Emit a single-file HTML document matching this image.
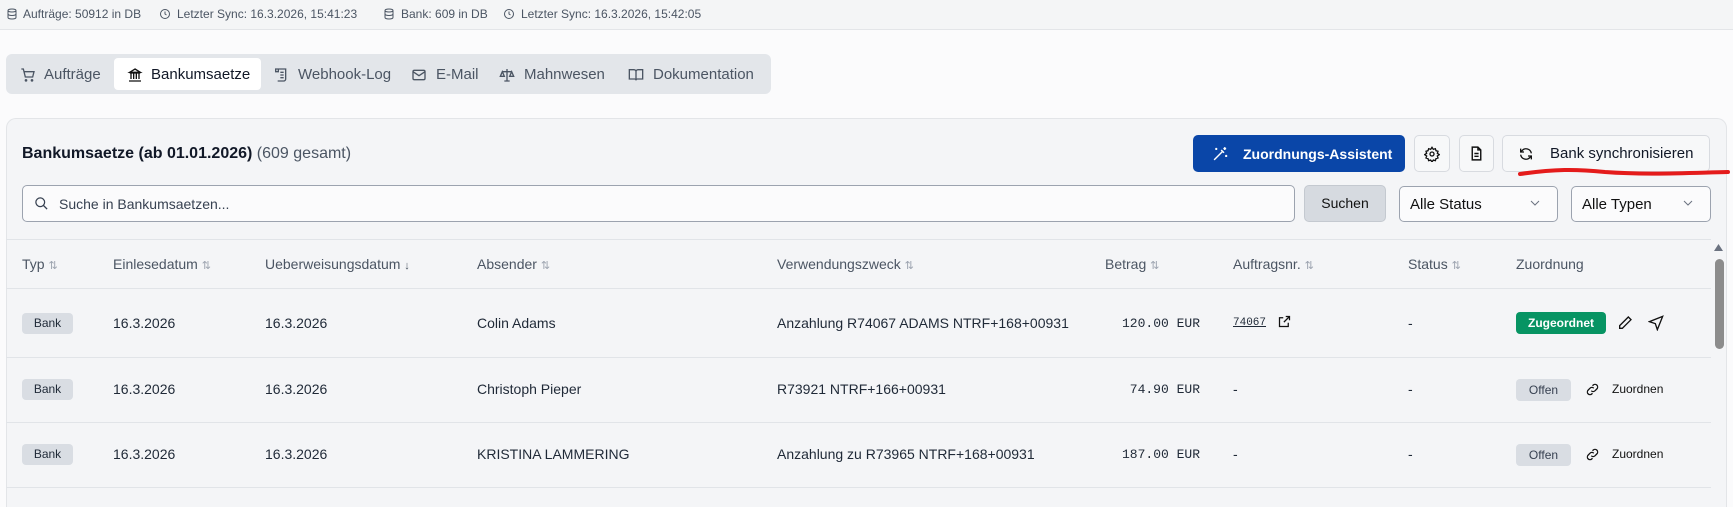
<!DOCTYPE html>
<html><head><meta charset="utf-8"><style>
*{box-sizing:border-box;margin:0;padding:0}
html,body{width:1733px;height:507px;overflow:hidden}
body{background:#fbfbfc;font-family:"Liberation Sans",sans-serif;color:#1f2937}
#w{position:relative;width:1733px;height:507px;overflow:hidden}
.a{position:absolute;white-space:nowrap}
.top{left:0;top:0;width:1733px;height:30px;background:#f4f5f6;border-bottom:1px solid #e3e5e8;font-size:12px;color:#4b5563}
.tabs{left:6px;top:54px;width:765px;height:40px;background:#e3e6ea;border-radius:6px}
.act{left:114px;top:58px;width:147px;height:32px;background:#fff;border-radius:4px}
.tab{font-size:15px;color:#4b5563;top:66px}
.card{left:6px;top:118px;width:1721px;height:389px;background:#f4f5f7;border:1px solid #e3e5e8;border-bottom:none;border-radius:10px 10px 0 0}
.btn{border:1px solid #d8dbe0;border-radius:5px;background:#f7f8f9}
.hd{font-size:14px;color:#4b5563;top:256px}
.c{font-size:14px;color:#1f2937}
.m{font-family:"Liberation Mono",monospace;font-size:13px}
.line{left:6px;width:1705px;height:1px;background:#e1e4e8}
.bank{width:51px;height:21px;background:#d9dde3;border-radius:4px;font-size:12px;text-align:center;line-height:21px;left:22px}
.off{width:55px;height:22px;background:#d9dde3;border-radius:4px;font-size:12px;text-align:center;line-height:22px;left:1516px;color:#374151}
.si{color:#9ca3af;font-size:11px}
svg{position:absolute}
</style></head><body><div id="w">
<div class="a top"></div>
<svg style="left:6px;top:8px" width="12" height="12" viewBox="0 0 24 24" fill="none" stroke="#4b5563" stroke-width="2"><ellipse cx="12" cy="5" rx="8" ry="3"/><path d="M4 5v14c0 1.7 3.6 3 8 3s8-1.3 8-3V5M4 12c0 1.7 3.6 3 8 3s8-1.3 8-3"/></svg>
<div class="a" style="left:23px;top:7px;font-size:12px;color:#4b5563">Aufträge: 50912 in DB</div>
<svg style="left:159px;top:8px" width="12" height="12" viewBox="0 0 24 24" fill="none" stroke="#4b5563" stroke-width="2"><circle cx="12" cy="12" r="9"/><path d="M12 7v5l3 2"/></svg>
<div class="a" style="left:177px;top:7px;font-size:12px;color:#4b5563">Letzter Sync: 16.3.2026, 15:41:23</div>
<svg style="left:383px;top:8px" width="12" height="12" viewBox="0 0 24 24" fill="none" stroke="#4b5563" stroke-width="2"><ellipse cx="12" cy="5" rx="8" ry="3"/><path d="M4 5v14c0 1.7 3.6 3 8 3s8-1.3 8-3V5M4 12c0 1.7 3.6 3 8 3s8-1.3 8-3"/></svg>
<div class="a" style="left:401px;top:7px;font-size:12px;color:#4b5563">Bank: 609 in DB</div>
<svg style="left:503px;top:8px" width="12" height="12" viewBox="0 0 24 24" fill="none" stroke="#4b5563" stroke-width="2"><circle cx="12" cy="12" r="9"/><path d="M12 7v5l3 2"/></svg>
<div class="a" style="left:521px;top:7px;font-size:12px;color:#4b5563">Letzter Sync: 16.3.2026, 15:42:05</div>

<div class="a tabs"></div><div class="a act"></div>
<svg style="left:20px;top:67px" width="16" height="16" viewBox="0 0 24 24" fill="none" stroke="#4b5563" stroke-width="2"><path d="M2 3h3l3 12h11l2-8H6"/><circle cx="9" cy="20" r="1"/><circle cx="18" cy="20" r="1"/></svg>
<div class="a tab" style="left:44px">Aufträge</div>
<svg style="left:127px;top:67px" width="16" height="16" viewBox="0 0 24 24" fill="none" stroke="#111" stroke-width="2"><path d="M3 21h18M4 9h16M12 3l8 5H4zM6 10v8M10 10v8M14 10v8M18 10v8"/></svg>
<div class="a tab" style="left:151px;color:#111827">Bankumsaetze</div>
<svg style="left:273px;top:67px" width="16" height="16" viewBox="0 0 24 24" fill="none" stroke="#4b5563" stroke-width="2"><path d="M8 3h11v15a3 3 0 0 1-3 3H7M4 3h4v4H4zM11 8h5M11 12h5M11 16h5"/></svg>
<div class="a tab" style="left:298px">Webhook-Log</div>
<svg style="left:411px;top:67px" width="16" height="16" viewBox="0 0 24 24" fill="none" stroke="#4b5563" stroke-width="2"><rect x="3" y="5" width="18" height="14" rx="2"/><path d="M3 7l9 6 9-6"/></svg>
<div class="a tab" style="left:436px">E-Mail</div>
<svg style="left:499px;top:67px" width="16" height="16" viewBox="0 0 24 24" fill="none" stroke="#4b5563" stroke-width="2"><path d="M12 3v18M5 7h14M5 7l-3 7h6zM19 7l-3 7h6zM8 21h8"/></svg>
<div class="a tab" style="left:524px">Mahnwesen</div>
<svg style="left:628px;top:67px" width="16" height="16" viewBox="0 0 24 24" fill="none" stroke="#4b5563" stroke-width="2"><path d="M2 4h7a3 3 0 0 1 3 3v13a2 2 0 0 0-2-2H2zM22 4h-7a3 3 0 0 0-3 3v13a2 2 0 0 1 2-2h8z"/></svg>
<div class="a tab" style="left:653px">Dokumentation</div>

<div class="a card"></div>
<div class="a" style="left:22px;top:145px;font-size:16px;font-weight:bold;color:#111827">Bankumsaetze (ab 01.01.2026) <span style="font-weight:normal;color:#4b5563">(609 gesamt)</span></div>

<div class="a" style="left:1193px;top:135px;width:212px;height:37px;background:#0a46a8;border-radius:5px"></div>
<svg style="left:1212px;top:145px" width="17" height="17" viewBox="0 0 24 24" fill="none" stroke="#fff" stroke-width="2"><path d="M3 21L15 9M13 7l4 4M18 3v4M16 5h4M6 4v3M4.5 5.5h3M20 14v3M18.5 15.5h3"/></svg>
<div class="a" style="left:1243px;top:146px;font-size:14px;font-weight:bold;color:#fff">Zuordnungs-Assistent</div>
<div class="a btn" style="left:1414px;top:135px;width:36px;height:37px"></div>
<svg style="left:1424px;top:146px" width="16" height="16" viewBox="0 0 24 24" fill="none" stroke="#111" stroke-width="2"><circle cx="12" cy="12" r="3"/><path d="M12 2l2 3 3-1 1 3 3 1-1 3 3 2-3 2 1 3-3 1-1 3-3-1-2 3-2-3-3 1-1-3-3-1 1-3-3-2 3-2-1-3 3-1 1-3 3 1z"/></svg>
<div class="a btn" style="left:1459px;top:135px;width:35px;height:37px"></div>
<svg style="left:1468px;top:145px" width="17" height="17" viewBox="0 0 24 24" fill="none" stroke="#111" stroke-width="2"><path d="M14 3H6v18h12V7zM14 3v4h4M9 12h6M9 16h6"/></svg>
<div class="a btn" style="left:1502px;top:135px;width:208px;height:37px"></div>
<svg style="left:1518px;top:146px" width="16" height="16" viewBox="0 0 24 24" fill="none" stroke="#111" stroke-width="2"><path d="M20 11a8 8 0 0 0-14-4L4 9M4 4v5h5M4 13a8 8 0 0 0 14 4l2-2M20 20v-5h-5"/></svg>
<div class="a" style="left:1550px;top:145px;font-size:15px;color:#111827">Bank synchronisieren</div>
<svg style="left:1515px;top:166px" width="218" height="14"><path d="M5 8 C40 3 60 3 90 6 C130 9 170 7 213 6" stroke="#e41b1b" stroke-width="4" fill="none" stroke-linecap="round"/></svg>

<div class="a" style="left:22px;top:185px;width:1273px;height:37px;background:#fbfbfc;border:1px solid #9ca3af;border-radius:5px"></div>
<svg style="left:34px;top:196px" width="15" height="15" viewBox="0 0 24 24" fill="none" stroke="#374151" stroke-width="2"><circle cx="10" cy="10" r="7"/><path d="M15 15l6 6"/></svg>
<div class="a" style="left:59px;top:196px;font-size:14px;color:#374151">Suche in Bankumsaetzen...</div>
<div class="a" style="left:1304px;top:185px;width:82px;height:37px;background:#d6dae0;border:1px solid #c4c9d0;border-radius:5px;font-size:14px;text-align:center;line-height:35px;color:#111">Suchen</div>
<div class="a" style="left:1399px;top:186px;width:159px;height:36px;background:#fbfbfc;border:1px solid #9ca3af;border-radius:5px"></div>
<div class="a" style="left:1410px;top:196px;font-size:15px;color:#111">Alle Status</div>
<svg style="left:1530px;top:200px" width="10" height="7"><path d="M1 1l4 4 4-4" stroke="#6b7280" fill="none"/></svg>
<div class="a" style="left:1571px;top:186px;width:140px;height:36px;background:#fbfbfc;border:1px solid #9ca3af;border-radius:5px"></div>
<div class="a" style="left:1582px;top:196px;font-size:15px;color:#111">Alle Typen</div>
<svg style="left:1683px;top:200px" width="10" height="7"><path d="M1 1l4 4 4-4" stroke="#6b7280" fill="none"/></svg>

<div class="a line" style="top:239px"></div>
<div class="a hd" style="left:22px">Typ <span class="si">⇅</span></div>
<div class="a hd" style="left:113px">Einlesedatum <span class="si">⇅</span></div>
<div class="a hd" style="left:265px">Ueberweisungsdatum <span class="si" style="color:#4b5563">↓</span></div>
<div class="a hd" style="left:477px">Absender <span class="si">⇅</span></div>
<div class="a hd" style="left:777px">Verwendungszweck <span class="si">⇅</span></div>
<div class="a hd" style="left:1105px">Betrag <span class="si">⇅</span></div>
<div class="a hd" style="left:1233px">Auftragsnr. <span class="si">⇅</span></div>
<div class="a hd" style="left:1408px">Status <span class="si">⇅</span></div>
<div class="a hd" style="left:1516px">Zuordnung</div>
<div class="a line" style="top:288px"></div>

<div class="a bank" style="top:313px">Bank</div>
<div class="a c" style="left:113px;top:315px">16.3.2026</div>
<div class="a c" style="left:265px;top:315px">16.3.2026</div>
<div class="a c" style="left:477px;top:315px">Colin Adams</div>
<div class="a c" style="left:777px;top:315px">Anzahlung R74067 ADAMS NTRF+168+00931</div>
<div class="a c m" style="right:533px;top:316px">120.00 EUR</div>
<div class="a m" style="left:1233px;top:317px;font-size:11px;text-decoration:underline">74067</div>
<svg style="left:1277px;top:314px" width="15" height="15" viewBox="0 0 24 24" fill="none" stroke="#111" stroke-width="2"><path d="M14 4h6v6M20 4l-9 9M18 14v6H4V6h6"/></svg>
<div class="a c" style="left:1408px;top:315px">-</div>
<div class="a" style="left:1516px;top:312px;width:90px;height:22px;background:#079463;border-radius:4px;color:#fff;font-size:12px;font-weight:bold;text-align:center;line-height:22px">Zugeordnet</div>
<svg style="left:1617px;top:315px" width="16" height="16" viewBox="0 0 24 24" fill="none" stroke="#111" stroke-width="2"><path d="M17 3l4 4L8 20H4v-4z"/></svg>
<svg style="left:1648px;top:315px" width="16" height="16" viewBox="0 0 24 24" fill="none" stroke="#111" stroke-width="2"><path d="M22 2L2 10l9 3 3 9z"/></svg>
<div class="a line" style="top:357px"></div>

<div class="a bank" style="top:379px">Bank</div>
<div class="a c" style="left:113px;top:381px">16.3.2026</div>
<div class="a c" style="left:265px;top:381px">16.3.2026</div>
<div class="a c" style="left:477px;top:381px">Christoph Pieper</div>
<div class="a c" style="left:777px;top:381px">R73921 NTRF+166+00931</div>
<div class="a c m" style="right:533px;top:382px">74.90 EUR</div>
<div class="a c" style="left:1233px;top:381px">-</div>
<div class="a c" style="left:1408px;top:381px">-</div>
<div class="a off" style="top:379px">Offen</div>
<svg style="left:1585px;top:382px" width="15" height="15" viewBox="0 0 24 24" fill="none" stroke="#111" stroke-width="2"><path d="M10 14a4 4 0 0 0 6 0l3-3a4 4 0 0 0-6-6l-1 1M14 10a4 4 0 0 0-6 0l-3 3a4 4 0 0 0 6 6l1-1"/></svg>
<div class="a" style="left:1612px;top:382px;font-size:12px;color:#111">Zuordnen</div>
<div class="a line" style="top:422px"></div>

<div class="a bank" style="top:444px">Bank</div>
<div class="a c" style="left:113px;top:446px">16.3.2026</div>
<div class="a c" style="left:265px;top:446px">16.3.2026</div>
<div class="a c" style="left:477px;top:446px">KRISTINA LAMMERING</div>
<div class="a c" style="left:777px;top:446px">Anzahlung zu R73965 NTRF+168+00931</div>
<div class="a c m" style="right:533px;top:447px">187.00 EUR</div>
<div class="a c" style="left:1233px;top:446px">-</div>
<div class="a c" style="left:1408px;top:446px">-</div>
<div class="a off" style="top:444px">Offen</div>
<svg style="left:1585px;top:447px" width="15" height="15" viewBox="0 0 24 24" fill="none" stroke="#111" stroke-width="2"><path d="M10 14a4 4 0 0 0 6 0l3-3a4 4 0 0 0-6-6l-1 1M14 10a4 4 0 0 0-6 0l-3 3a4 4 0 0 0 6 6l1-1"/></svg>
<div class="a" style="left:1612px;top:447px;font-size:12px;color:#111">Zuordnen</div>
<div class="a line" style="top:487px"></div>

<div class="a" style="left:1711px;top:240px;width:15px;height:267px;background:#f4f5f7"></div>
<svg style="left:1714px;top:244px" width="9" height="7"><path d="M0 7L4.5 0 9 7z" fill="#6b7280"/></svg>
<div class="a" style="left:1715px;top:259px;width:9px;height:90px;background:#8c8c8c;border-radius:5px"></div>
</div></body></html>
